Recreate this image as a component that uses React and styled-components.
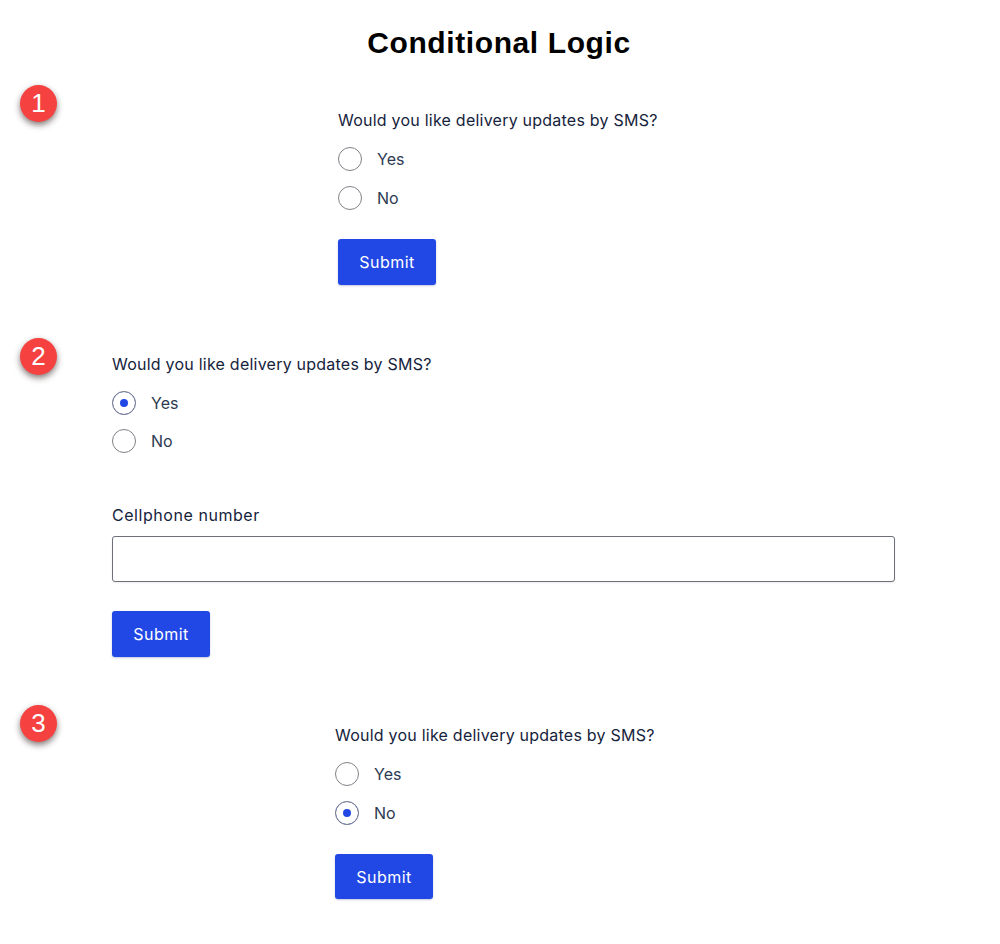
import styled, { createGlobalStyle } from 'styled-components';

const GlobalStyle = createGlobalStyle`
  html, body {
    margin: 0;
    padding: 0;
    background: #fff;
  }
`;

const Page = styled.div`
  width: 1000px;
  height: 944px;
  overflow: hidden;
  box-sizing: border-box;
  padding: 25px 20px 0;
  display: flex;
  flex-direction: column;
  font-family: Inter, "Noto Sans", sans-serif;
  color: #16233c;
`;

const Title = styled.h1`
  margin: 0 0 24px;
  height: 36px;
  padding-right: 2px;
  font-family: "Liberation Sans", Arial, sans-serif;
  font-size: 30px;
  line-height: 36px;
  font-weight: 700;
  letter-spacing: 0.6px;
  text-align: center;
  color: #000;
`;

const Section = styled.section`
  display: flex;
  align-items: flex-start;
  margin-top: ${props => props.$top}px;
`;

const Badge = styled.div`
  flex: none;
  width: 37px;
  height: 37px;
  border-radius: 50%;
  background: #f5413f;
  color: #fff;
  font-family: "Liberation Sans", Arial, sans-serif;
  font-size: 26px;
  line-height: 36px;
  text-align: center;
  box-shadow: 0 3px 6px rgba(50, 30, 30, 0.6);
`;

const Form = styled.form`
  width: ${props => props.$width}px;
  margin: 0 0 0 ${props => props.$left}px;
  padding-top: ${props => props.$pad}px;
`;

const Label = styled.div`
  height: 24px;
  font-size: 16px;
  line-height: 24px;
  font-weight: 400;
  letter-spacing: 0.23px;
  white-space: nowrap;
`;

const Options = styled.div`
  display: flex;
  flex-direction: column;
  gap: ${props => props.$gap}px;
  margin-top: 15px;
`;

const Option = styled.label`
  display: flex;
  align-items: center;
  gap: 15px;
  height: 24px;
  font-size: 16px;
  line-height: 24px;
  color: #2c3a52;
`;

const Radio = styled.input.attrs({ type: 'radio' })`
  appearance: none;
  flex: none;
  width: 24px;
  height: 24px;
  margin: 0;
  border: 1px solid #818288;
  border-radius: 50%;
  background: #fff;
  &:checked {
    background: #2148e4;
    box-shadow: inset 0 0 0 7px #fff;
  }
`;

const FieldLabel = styled(Label)`
  margin-top: 50px;
  letter-spacing: 0.55px;
`;

const TextInput = styled.input`
  display: block;
  box-sizing: border-box;
  width: 100%;
  height: 46px;
  margin-top: 9px;
  border: 1px solid #6d6f7a;
  border-radius: 3px;
  background: #fff;
  box-shadow: 0 1px 2px rgba(0, 0, 0, 0.08);
`;

const SubmitButton = styled.button`
  display: block;
  width: 98px;
  height: ${props => props.$height || 46}px;
  margin-top: 29px;
  padding: 0;
  border: 0;
  border-radius: 3px;
  background: #2148e4;
  color: #fff;
  font-family: inherit;
  font-size: 16px;
  font-weight: 400;
  letter-spacing: 0.5px;
  box-shadow: 0 1px 2px rgba(20, 40, 120, 0.25);
`;

const App = () => (
  <Page>
    <GlobalStyle />
    <Title>Conditional Logic</Title>

    <Section $top={0}>
      <Badge>1</Badge>
      <Form $left={281} $width={400} $pad={23}>
        <Label>Would you like delivery updates by SMS?</Label>
        <Options $gap={15}>
          <Option><Radio name="a" />Yes</Option>
          <Option><Radio name="a" />No</Option>
        </Options>
        <SubmitButton type="button">Submit</SubmitButton>
      </Form>
    </Section>

    <Section $top={53}>
      <Badge>2</Badge>
      <Form $left={55} $width={783} $pad={14}>
        <Label>Would you like delivery updates by SMS?</Label>
        <Options $gap={14}>
          <Option><Radio name="b" defaultChecked />Yes</Option>
          <Option><Radio name="b" />No</Option>
        </Options>
        <FieldLabel>Cellphone number</FieldLabel>
        <TextInput type="text" />
        <SubmitButton type="button">Submit</SubmitButton>
      </Form>
    </Section>

    <Section $top={48}>
      <Badge>3</Badge>
      <Form $left={278} $width={400} $pad={18}>
        <Label>Would you like delivery updates by SMS?</Label>
        <Options $gap={15}>
          <Option><Radio name="c" />Yes</Option>
          <Option><Radio name="c" defaultChecked />No</Option>
        </Options>
        <SubmitButton type="button" $height={45}>Submit</SubmitButton>
      </Form>
    </Section>
  </Page>
);

export default App;
